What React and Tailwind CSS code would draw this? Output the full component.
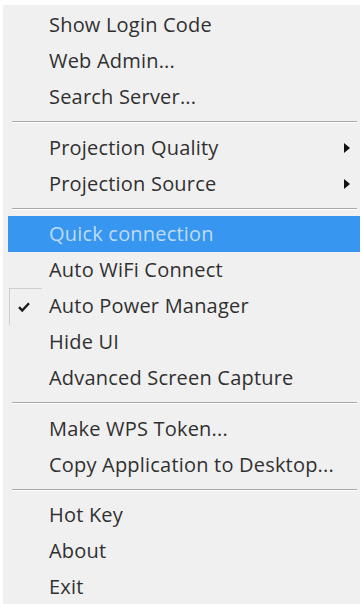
import React from 'react';

const groups = [
    [{ label: 'Show Login Code' }, { label: 'Web Admin...' }, { label: 'Search Server...' }],
    [{ label: 'Projection Quality', sub: true }, { label: 'Projection Source', sub: true }],
    [
        { label: 'Quick connection', active: true },
        { label: 'Auto WiFi Connect' },
        { label: 'Auto Power Manager', checked: true },
        { label: 'Hide UI' },
        { label: 'Advanced Screen Capture' },
    ],
    [{ label: 'Make WPS Token...' }, { label: 'Copy Application to Desktop...' }],
    [{ label: 'Hot Key' }, { label: 'About' }, { label: 'Exit' }],
];

function Item({ item }) {
    return (
        <div
            className={`relative flex items-center h-[36px] ml-[5px] pl-[41px] pr-[8px] ${
                item.active ? 'bg-[#3797f0] text-[#bfdcf6]' : 'text-[#303030]'
            }`}
        >
            {item.checked && (
                <div className="absolute left-[1px] top-0 w-[33px] h-[37px] border-l border-t border-[#cfcfcf] flex items-center justify-center">
                    <svg width="12" height="10" viewBox="0 0 12 10" className="ml-[-4px]">
                        <path d="M1 5.2 L4.2 8.5 L11 1.2" fill="none" stroke="#1a1a1a" strokeWidth="2.4" />
                    </svg>
                </div>
            )}
            <span className="flex-1 tracking-[0.2px]">{item.label}</span>
            {item.sub && (
                <svg width="6" height="10" viewBox="0 0 6 10" className="mr-[2px]">
                    <path d="M0 0 L6 5 L0 10 Z" fill="#111" />
                </svg>
            )}
        </div>
    );
}

export default function App() {
    return (
        <div className="w-[362px] h-[604px] bg-white overflow-hidden">
            <div className="ml-[3px] mt-[5px] w-[357px] h-[620px] bg-[#f0f0f0] pt-[2px] font-['Open_Sans',sans-serif] text-[20px] leading-none">
                {groups.map((g, gi) => (
                    <div key={gi}>
                        {gi > 0 && (
                            <div className="h-[14.5px] flex flex-col justify-center pl-[9px] pr-[3px]">
                                <div className="border-t border-[#a8a8a8] border-b-white border-b" />
                            </div>
                        )}
                        {g.map((item) => (
                            <Item key={item.label} item={item} />
                        ))}
                    </div>
                ))}
            </div>
        </div>
    );
}
